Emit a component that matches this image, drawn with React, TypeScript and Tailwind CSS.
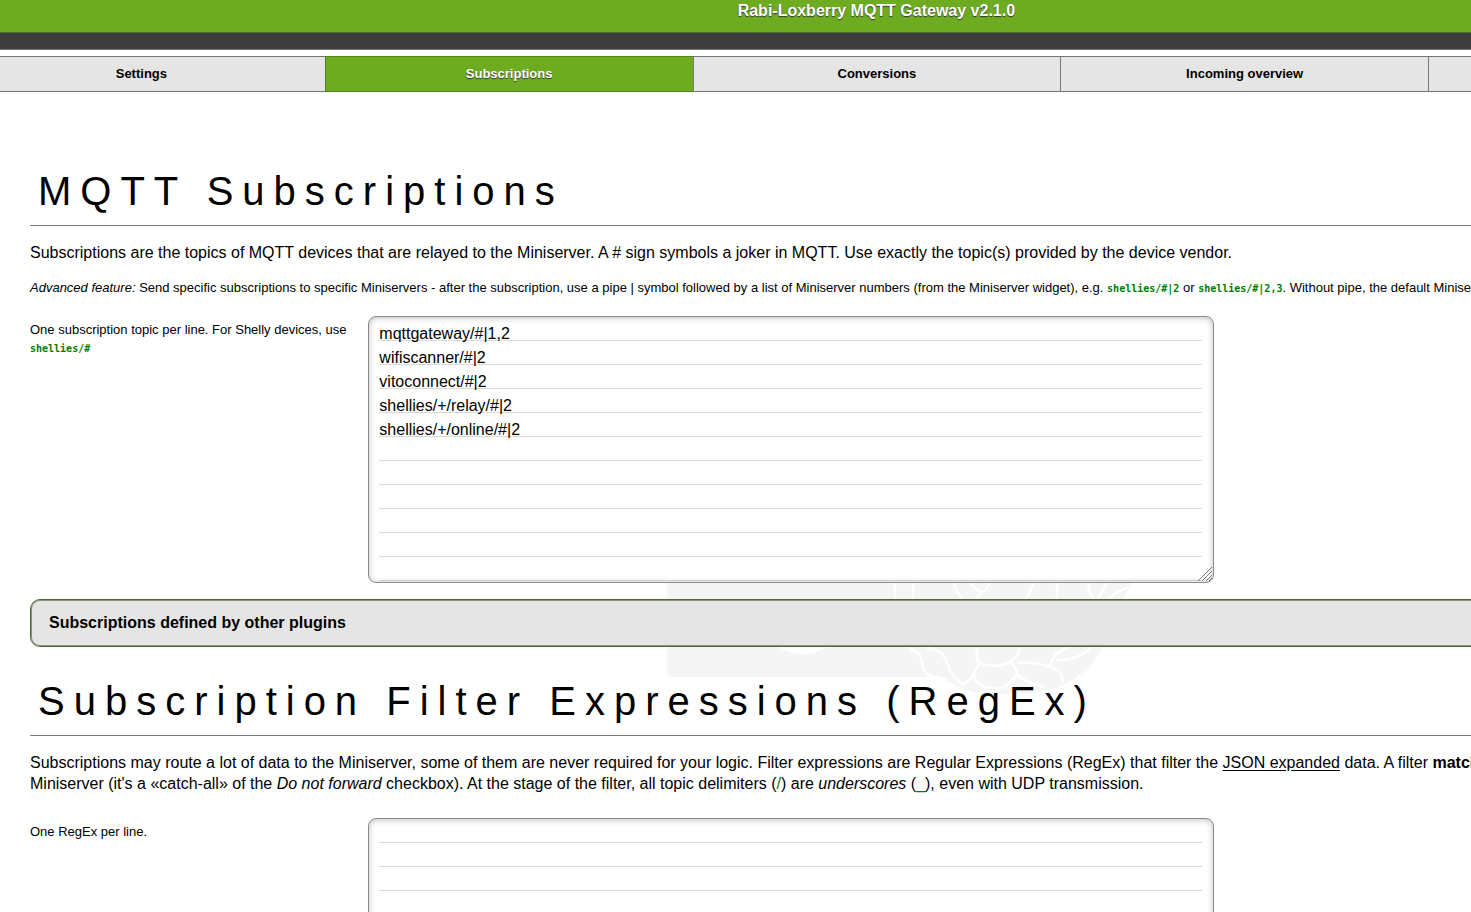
import type { ReactNode } from "react";

const TABS = [
  "Settings",
  "Subscriptions",
  "Conversions",
  "Incoming overview",
  "",
];

const DEFAULT_SUBSCRIPTIONS = [
  "mqttgateway/#|1,2",
  "wifiscanner/#|2",
  "vitoconnect/#|2",
  "shellies/+/relay/#|2",
  "shellies/+/online/#|2",
].join("\n");

function Code({ children }: { children: ReactNode }) {
  return (
    <code className="font-['DejaVu_Sans_Mono',monospace] text-[10px] font-bold text-[#007d00]">
      {children}
    </code>
  );
}

function SectionTitle({ children }: { children: ReactNode }) {
  return (
    <h1 className="border-b border-[#7b7b7b] pb-2 pl-2 text-[40px] leading-[51px] tracking-[9px]">
      {children}
    </h1>
  );
}

function LinedTextarea({
  id,
  label,
  defaultValue,
}: {
  id: string;
  label: ReactNode;
  defaultValue?: string;
}) {
  return (
    <div className="flex">
      <label htmlFor={id} className="w-1/5 pt-[5px] pr-4 text-[13px] leading-[18px]">
        {label}
      </label>
      <div className="relative w-1/2">
        <textarea
          id={id}
          defaultValue={defaultValue}
          spellCheck={false}
          className="block h-[267px] w-full resize-none rounded-lg border border-[#8a8a8a] bg-white bg-[linear-gradient(transparent_18px,#d9d9d9_18px,#d9d9d9_19px,transparent_19px)] bg-[length:100%_24px] bg-clip-content bg-origin-content pt-[5px] pr-[11px] pl-[10px] text-base leading-6 shadow-[inset_0_1px_6px_rgba(0,0,0,0.25)] outline-none"
        />
        <svg
          className="pointer-events-none absolute right-0.5 bottom-0.5 size-3.5"
          viewBox="0 0 14 14"
          fill="none"
          stroke="#777"
          aria-hidden="true"
        >
          <path d="M0 14 14 0M4 14 14 4M8 14l6-6M11 14l3-3" />
        </svg>
      </div>
    </div>
  );
}

// Lower part of the board with the berry that shows behind the content
function Watermark() {
  return (
    <svg
      className="absolute top-0 left-[637px] -z-10 h-[120px] w-[464px]"
      viewBox="0 0 464 120"
      fill="none"
      aria-hidden="true"
    >
      <path
        d="M0 0H464L456 17 435 65C430 78 415 92 400 100C385 108 365 112 345 110C325 114 305 110 290 103L270 94H6Q0 94 0 88Z"
        fill="#f5f5f5"
      />
      <path d="M108 62Q136 80 164 62Z" fill="#fff" />
      <path
        d="M228 0V17M246 0V17M287 0Q289 10 296 16M303 0Q308 7 315 9Q320 7 322 0M315 9 308 17M366 0Q364 9 358 17M390 0V17M421 0Q422 10 427 17M440 0 430 17M462 4Q450 8 440 17M243 65Q255 70 255 80Q257 94 270 94L281 97M260 65Q276 66 280 80Q283 92 296 102L308 92M311 65Q307 76 313 80Q328 86 343 79Q351 74 353 65M313 80 306 91Q310 102 318 104Q332 107 340 102L350 92Q350 84 343 79M350 80Q370 79 383 84Q386 69 402 64M383 84Q396 88 396 99M389 77Q410 78 424 65M318 104 314 115M350 92Q362 101 378 104"
        stroke="#fff"
        strokeWidth="2.5"
      />
    </svg>
  );
}

export default function App() {
  return (
    <div className="isolate h-screen overflow-hidden bg-white font-['Liberation_Sans',Arial,sans-serif] text-base text-black">
      <div className="-ml-[43px] w-[125%]">
        <header className="h-[33px] border-b border-[#4a6a2c] bg-[#6dac20] text-center leading-[21px] font-bold text-white [text-shadow:0_1px_1px_#333]">
          Rabi-Loxberry MQTT Gateway v2.1.0
        </header>
        <div className="h-[17px] border-b border-[#777] bg-[#3d3d3d]" />
        <nav className="mt-1.5 grid grid-cols-5 border-y border-[#777] bg-[#e5e5e5] text-center text-[13px] leading-[34px] font-bold">
          {TABS.map((tab, i) => (
            <a
              key={i}
              href="#"
              className={
                tab === "Subscriptions"
                  ? "-my-px border-y border-l border-[#54831b] bg-[#6dac20] text-white [text-shadow:0_1px_1px_#333]"
                  : "border-l border-[#777]"
              }
            >
              {tab}
            </a>
          ))}
        </nav>
      </div>

      <main className="ml-[30px] w-[115%] pt-[74px]">
        <SectionTitle>MQTT Subscriptions</SectionTitle>
        <p className="mt-4 leading-[21px]">
          Subscriptions are the topics of MQTT devices that are relayed to the
          Miniserver. A # sign symbols a joker in MQTT. Use exactly the topic(s)
          provided by the device vendor.
        </p>
        <p className="mt-4 mb-[18px] text-[13px] leading-[18px] whitespace-nowrap">
          <i>Advanced feature:</i> Send specific subscriptions to specific
          Miniservers - after the subscription, use a pipe | symbol followed by
          a list of Miniserver numbers (from the Miniserver widget), e.g.{" "}
          <Code>shellies/#|2</Code> or <Code>shellies/#|2,3</Code>. Without
          pipe, the default Miniserver is used.
        </p>
        <LinedTextarea
          id="subscriptions"
          defaultValue={DEFAULT_SUBSCRIPTIONS}
          label={
            <>
              One subscription topic per line. For Shelly devices, use{" "}
              <Code>shellies/#</Code>
            </>
          }
        />

        <div className="relative pt-4">
          <Watermark />
          <button
            type="button"
            className="block h-12 w-full rounded-[10px] border border-[#4d6b2f] bg-[#e5e5e5] px-[18px] text-left font-bold shadow-[inset_0_0_0_1px_#8a9480]"
          >
            Subscriptions defined by other plugins
          </button>
        </div>

        <div className="mt-[29px]">
          <SectionTitle>Subscription Filter Expressions (RegEx)</SectionTitle>
        </div>
        <p className="mt-4 mb-6 leading-[21px] whitespace-nowrap">
          Subscriptions may route a lot of data to the Miniserver, some of them
          are never required for your logic. Filter expressions are Regular
          Expressions (RegEx) that filter the{" "}
          <a href="#" className="underline underline-offset-2">
            JSON expanded
          </a>{" "}
          data. A filter <b>match</b> will block sending to the
          <br />
          Miniserver (it's a «catch-all» of the <i>Do not forward</i> checkbox).
          At the stage of the filter, all topic delimiters (
          <span className="text-[#007d00]">/</span>) are <i>underscores</i> (
          <span className="text-[#007d00]">_</span>), even with UDP
          transmission.
        </p>
        <LinedTextarea id="filters" label="One RegEx per line." />
      </main>
    </div>
  );
}
